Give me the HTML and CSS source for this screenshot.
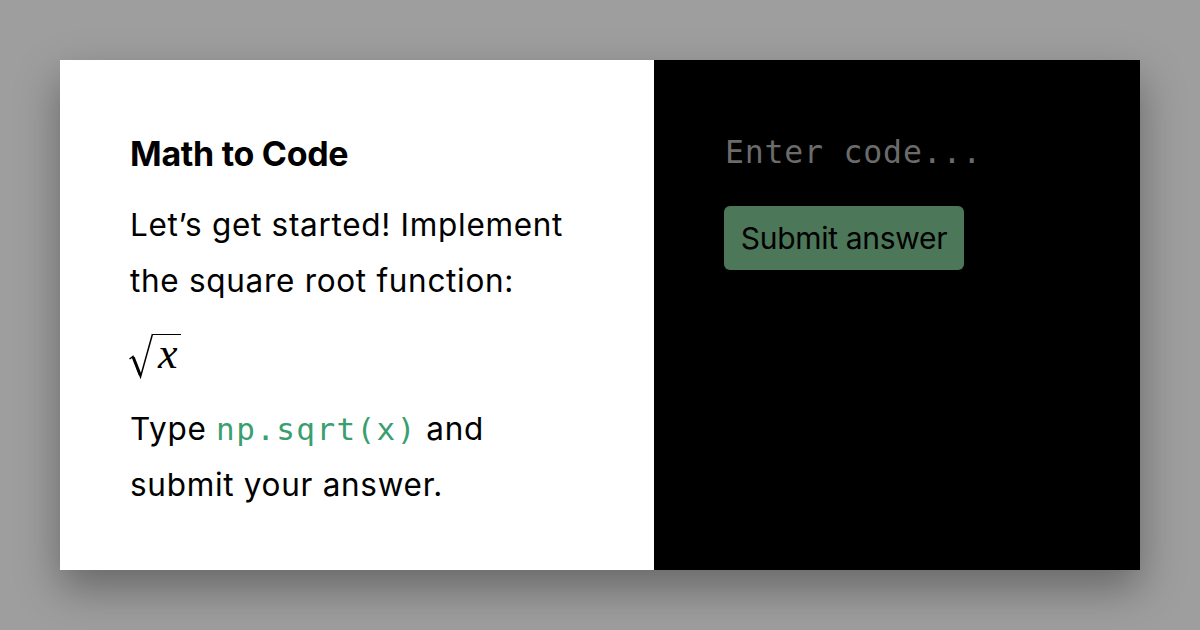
FILE: index.html
```html
<!DOCTYPE html>
<html>
<head>
<meta charset="utf-8">
<link rel="stylesheet" href="styles.css">
</head>
<body>
<div class="card">
  <section class="lesson">
    <h1 class="title">Math to Code</h1>
    <p class="text">Let’s get started! Implement the square root function:</p>
    <div class="math">
      <svg class="radical" width="24" height="46" viewBox="0 0 24 46"><path d="M0.5 26 L4 23.5 L11.5 44 L23.5 1" fill="none" stroke="#000" stroke-width="1.5" stroke-linejoin="miter"/><path d="M4.2 24.3 L11.2 42" stroke="#000" stroke-width="3" fill="none"/></svg>
      <span class="radicand">x</span>
    </div>
    <p class="text">Type <code class="code">np.sqrt(x)</code> and submit your answer.</p>
  </section>
  <section class="editor">
    <div class="placeholder">Enter code...</div>
    <button class="submit">Submit answer</button>
  </section>
</div>
</body>
</html>
```
FILE: styles.css
```css
html, body { margin: 0; padding: 0; }
body {
  width: 1200px;
  height: 630px;
  background: #9e9e9e;
  font-family: Inter, "Noto Sans", sans-serif;
  padding: 60px;
  box-sizing: border-box;
}
.card {
  display: flex;
  height: 510px;
  box-shadow: 0 18px 40px rgba(0,0,0,0.35);
}
.lesson {
  width: 594px;
  background: #fff;
  padding: 70px 70px 0 70px;
  box-sizing: border-box;
}
.title {
  margin: 0 0 19px;
  font-size: 34px;
  font-weight: 700;
  line-height: 48px;
  letter-spacing: -0.3px;
  color: #000;
}
.text {
  margin: 0;
  font-size: 31.5px;
  line-height: 56px;
  letter-spacing: 0.7px;
  color: #000;
  width: 445px;
}
.math {
  display: flex;
  align-items: flex-start;
  height: 46px;
  margin: 24px 0 22px -1px;
}
.radical { display: block; }
.radicand {
  font-family: "Liberation Serif", serif;
  font-style: italic;
  font-size: 44px;
  line-height: 38px;
  border-top: 1.5px solid #000;
  margin-top: 0.5px;
  padding: 0 3px 0 5px;
  height: 42px;
  box-sizing: border-box;
}
.code {
  font-family: "DejaVu Sans Mono", monospace;
  font-size: 31px;
  color: #3a9e6e;
  letter-spacing: 1.4px;
}
.editor {
  flex: 1;
  background: #000;
  padding: 70px 70px 0 70px;
  box-sizing: border-box;
}
.placeholder {
  font-family: "DejaVu Sans Mono", monospace;
  font-size: 31.5px;
  line-height: 44px;
  letter-spacing: 0.8px;
  color: #6b6b6b;
  margin-left: 1px;
}
.submit {
  margin-top: 32px;
  display: block;
  background: #4d7759;
  border: none;
  border-radius: 6px;
  font-family: Inter, sans-serif;
  font-size: 30px;
  letter-spacing: -0.3px;
  color: #000;
  height: 64px;
  width: 240px;
  padding: 0;
}
```
